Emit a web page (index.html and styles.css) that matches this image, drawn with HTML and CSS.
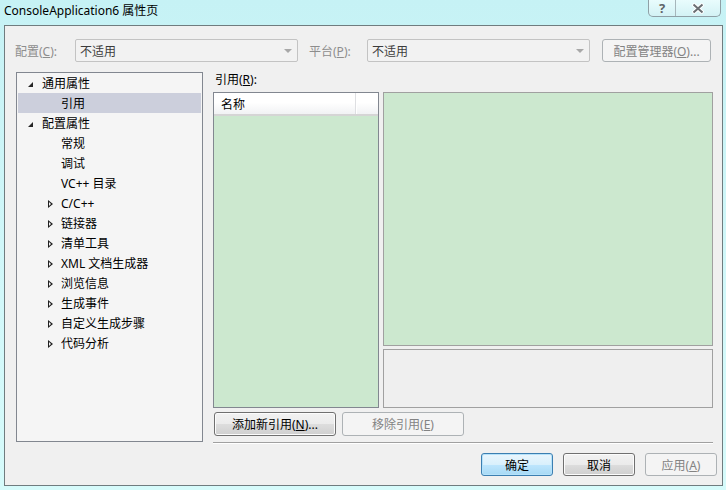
FILE: index.html
```html
<!DOCTYPE html>
<html lang="zh-CN">
<head>
  <meta charset="UTF-8" />
  <title>ConsoleApplication6 属性页</title>
  <link rel="stylesheet" href="styles.css">
</head>
<body>
  <div class="window">
    <div class="titlebar">
      <span class="title">ConsoleApplication6 属性页</span>
      <div class="caption-buttons">
        <span class="cap-btn help">?</span>
        <span class="cap-btn close">
          <svg width="12" height="11" viewBox="0 0 12 11"><path d="M1 1 L11 10 M11 1 L1 10" stroke="#fff" stroke-width="4"/><path d="M1.5 1.5 L10.5 9.5 M10.5 1.5 L1.5 9.5" stroke="#6a6f73" stroke-width="2"/></svg>
        </span>
      </div>
    </div>

    <div class="client">
      <div class="top-row">
        <span class="field-label disabled">配置(<u>C</u>):</span>
        <div class="combo"><span>不适用</span><i class="combo-arrow"></i></div>
        <span class="field-label disabled second">平台(<u>P</u>):</span>
        <div class="combo"><span>不适用</span><i class="combo-arrow"></i></div>
        <button class="btn disabled config-btn">配置管理器(<u>O</u>)...</button>
      </div>

      <div class="main-row">
        <ul class="tree">
          <li class="node lvl0"><i class="expanded"></i>通用属性</li>
          <li class="node lvl1 selected">引用</li>
          <li class="node lvl0"><i class="expanded"></i>配置属性</li>
          <li class="node lvl1">常规</li>
          <li class="node lvl1">调试</li>
          <li class="node lvl1">VC++ 目录</li>
          <li class="node lvl1"><i class="collapsed"></i>C/C++</li>
          <li class="node lvl1"><i class="collapsed"></i>链接器</li>
          <li class="node lvl1"><i class="collapsed"></i>清单工具</li>
          <li class="node lvl1"><i class="collapsed"></i>XML 文档生成器</li>
          <li class="node lvl1"><i class="collapsed"></i>浏览信息</li>
          <li class="node lvl1"><i class="collapsed"></i>生成事件</li>
          <li class="node lvl1"><i class="collapsed"></i>自定义生成步骤</li>
          <li class="node lvl1"><i class="collapsed"></i>代码分析</li>
        </ul>

        <div class="refs">
          <div class="refs-label">引用(<u>R</u>):</div>
          <div class="refs-panels">
            <div class="listview">
              <div class="list-header">
                <span class="col-name">名称</span>
                <span class="col-rest"></span>
              </div>
            </div>
            <div class="detail">
              <div class="detail-top"></div>
              <div class="detail-bottom"></div>
            </div>
          </div>
          <div class="refs-buttons">
            <button class="btn wide">添加新引用(<u>N</u>)...</button>
            <button class="btn wide disabled">移除引用(<u>E</u>)</button>
          </div>
          <div class="separator"></div>
        </div>
      </div>

      <div class="dialog-buttons">
        <button class="btn default">确定</button>
        <button class="btn">取消</button>
        <button class="btn disabled">应用(<u>A</u>)</button>
      </div>
    </div>
  </div>
</body>
</html>
```

FILE: styles.css
```css
* {
  margin: 0;
  padding: 0;
  box-sizing: border-box;
}

body {
  font-family: "Noto Sans", "Noto Sans CJK SC", sans-serif;
  font-size: 12px;
  color: #000;
  background: #c8f3f5;
  overflow: hidden;
}

.window {
  width: 726px;
  height: 490px;
  background: linear-gradient(#c6f2f5, #d2f8fa 60%, #d6fbfb);
}

.titlebar {
  height: 25px;
  display: flex;
  align-items: flex-start;
}

.title {
  padding: 3px 0 0 4px;
  font-size: 12px;
  line-height: 16px;
}

.caption-buttons {
  margin-left: auto;
  margin-right: 5px;
  display: flex;
  height: 17px;
  border: 1px solid #8fa0a6;
  border-top: none;
  border-radius: 0 0 5px 5px;
  overflow: hidden;
  background: linear-gradient(#e9fcfd, #d3f2f5);
}

.cap-btn {
  display: flex;
  align-items: center;
  justify-content: center;
  height: 16px;
  color: #5e6468;
  font-weight: bold;
  font-size: 13px;
}

.cap-btn.help {
  width: 27px;
  border-right: 1px solid #a6b6bb;
}

.cap-btn.close {
  width: 44px;
}

.client {
  margin: 0 3px 0 4px;
  height: 461px;
  border: 1px solid #707c7f;
  background: #f0f0f0;
  padding: 13px 5px 0 11px;
}

u {
  text-decoration: underline;
  text-underline-offset: 1px;
}

.top-row {
  display: flex;
  align-items: center;
  height: 23px;
  margin-left: -1px;
}

.field-label {
  width: 60px;
}

.field-label.second {
  width: 58px;
  margin-left: 11px;
}

.disabled {
  color: #8d8d8d;
}

.combo {
  width: 223px;
  height: 23px;
  border: 1px solid #c3c3c3;
  border-radius: 2px;
  background: #f2f2f2;
  display: flex;
  align-items: center;
  padding-left: 4px;
  color: #3c3c3c;
}

.combo span {
  flex: 1;
}

.combo-arrow {
  width: 0;
  height: 0;
  border-left: 4px solid transparent;
  border-right: 4px solid transparent;
  border-top: 4px solid #a8a8a8;
  margin-right: 5px;
}

.btn {
  font-family: inherit;
  font-size: 12px;
  height: 23px;
  width: 72px;
  border: 1px solid #707070;
  border-radius: 3px;
  background: linear-gradient(#f2f2f2, #ebebeb 50%, #dddddd 51%, #cfcfcf);
  color: #000;
  box-shadow: inset 0 0 0 1px #fcfcfc;
}

.btn.disabled {
  border-color: #adb2b5;
  background: #f4f4f4;
  color: #838383;
  box-shadow: none;
}

.btn.default {
  border-color: #3c7fb1;
  background: linear-gradient(#eaf6fd, #d9f0fc 50%, #bee6fd 51%, #a7d9f5);
  box-shadow: inset 0 0 0 1px #b6e2fa;
}

.config-btn {
  width: 109px;
  margin-left: 12px;
}

.main-row {
  display: flex;
  align-items: flex-start;
  margin-top: 10px;
  gap: 10px;
}

.tree {
  list-style: none;
  width: 187px;
  height: 370px;
  border: 1px solid #828790;
  background: #f5f5f5;
  padding: 0 1px;
}

.node {
  height: 20px;
  line-height: 18px;
  padding-top: 2px;
  display: flex;
  align-items: center;
  white-space: nowrap;
}

.node.lvl0 {
  padding-left: 24px;
}

.node.lvl1 {
  padding-left: 43px;
}

.node.selected {
  background: #cccfdc;
}

.node i {
  width: 0;
  height: 0;
  margin-left: -14px;
  margin-right: 9px;
}

.node i.expanded {
  border-left: 5px solid transparent;
  border-bottom: 5px solid #262626;
  margin-right: 9px;
}

.node i.collapsed {
  width: 6px;
  height: 9px;
  margin-left: -13px;
  margin-right: 7px;
  position: relative;
}

.node i.collapsed::before {
  content: "";
  position: absolute;
  left: 0;
  top: 0;
  border-top: 4.5px solid transparent;
  border-bottom: 4.5px solid transparent;
  border-left: 5px solid #1f1f1f;
}

.node i.collapsed::after {
  content: "";
  position: absolute;
  left: 1px;
  top: 2px;
  border-top: 2.5px solid transparent;
  border-bottom: 2.5px solid transparent;
  border-left: 2.8px solid #f5f5f5;
}

.refs {
  width: 500px;
}

.refs-label {
  height: 20px;
  line-height: 16px;
  padding-left: 2px;
}

.refs-panels {
  display: flex;
  gap: 4px;
  height: 316px;
}

.listview {
  width: 166px;
  border: 1px solid #828790;
  background: #cce8cf;
}

.list-header {
  display: flex;
  height: 23px;
  background: linear-gradient(#ffffff, #ffffff 45%, #f1f2f4);
  border-bottom: 2px solid #d5d5d5;
}

.col-name {
  width: 142px;
  padding: 2px 0 0 7px;
  line-height: 19px;
  border-right: 1px solid #dedfe2;
  box-shadow: 1px 0 0 #ffffff;
}

.col-rest {
  flex: 1;
}

.detail {
  width: 330px;
  display: flex;
  flex-direction: column;
  gap: 3px;
}

.detail-top {
  height: 254px;
  border: 1px solid #a0a0a0;
  background: #cce8cf;
}

.detail-bottom {
  height: 59px;
  border: 1px solid #a0a0a0;
  background: #efefef;
}

.refs-buttons {
  display: flex;
  gap: 6px;
  margin-top: 4px;
  padding-left: 1px;
}

.btn.wide {
  width: 122px;
  height: 24px;
}

.separator {
  margin-top: 6px;
  height: 1px;
  background: #a0a0a0;
  box-shadow: 0 1px 0 #ffffff;
}

.dialog-buttons {
  display: flex;
  justify-content: flex-end;
  gap: 10px;
  margin-top: 10px;
}
```
